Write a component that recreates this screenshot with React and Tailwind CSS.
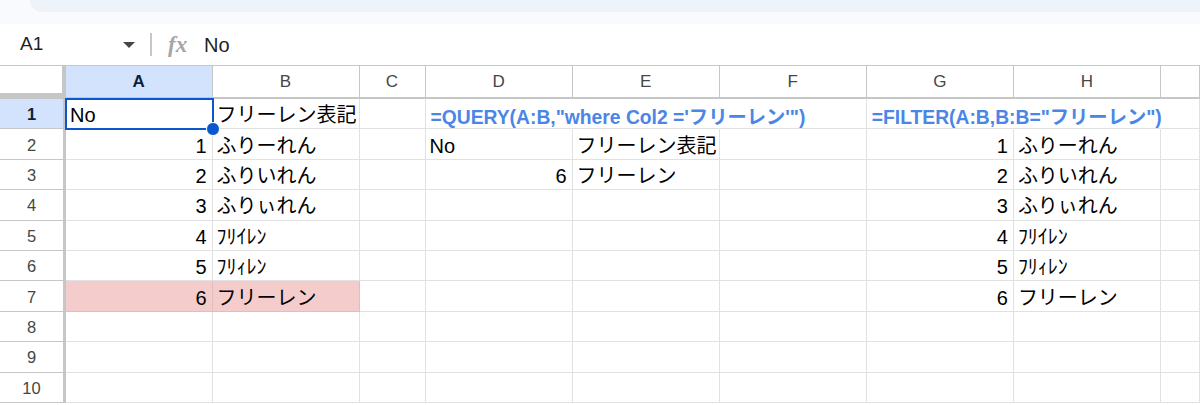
import React from 'react';

const FONT = "font-['Liberation_Sans','Noto_Sans_CJK_JP',sans-serif]";

const COLS = [
  { key: 'A', w: 'w-[146.5px]' },
  { key: 'B', w: 'w-[147px]' },
  { key: 'C', w: 'w-[66px]' },
  { key: 'D', w: 'w-[147.1px]' },
  { key: 'E', w: 'w-[147.1px]' },
  { key: 'F', w: 'w-[147.1px]' },
  { key: 'G', w: 'w-[147.1px]' },
  { key: 'H', w: 'w-[147.1px]' },
  { key: 'I', w: 'flex-1', hidden: true },
];

const SOURCE = ['ふりーれん', 'ふりいれん', 'ふりぃれん', 'ﾌﾘｲﾚﾝ', 'ﾌﾘｨﾚﾝ', 'フリーレン'];

// cell values per row, keyed by column; numbers are right aligned
function rowData(r) {
  const cells = {};
  if (r === 1) {
    cells.A = { v: 'No' };
    cells.B = { v: 'フリーレン表記' };
    cells.D = { v: `=QUERY(A:B,"where Col2 ='フリーレン'")`, formula: true };
    cells.G = { v: `=FILTER(A:B,B:B="フリーレン")`, formula: true };
  } else if (r <= 7) {
    const i = r - 1;
    cells.A = { v: String(i), num: true };
    cells.B = { v: SOURCE[i - 1] };
    cells.G = { v: String(i), num: true };
    cells.H = { v: SOURCE[i - 1] };
    if (r === 2) {
      cells.D = { v: 'No' };
      cells.E = { v: 'フリーレン表記' };
    }
    if (r === 3) {
      cells.D = { v: '6', num: true };
      cells.E = { v: 'フリーレン' };
    }
  }
  return cells;
}

// overflowing formula text hides the right gridline of the cells it runs over
const NO_RIGHT = { 1: ['D', 'E', 'G', 'H'] };

function Cell({ col, row, cell }) {
  const pink = row === 7 && (col.key === 'A' || col.key === 'B');
  const hideRight = (NO_RIGHT[row] || []).includes(col.key);
  return (
    <div
      className={[
        col.w,
        'relative h-full shrink-0 flex items-center pt-[3px] border-b',
        hideRight ? 'border-r border-r-transparent' : 'border-r',
        pink ? 'bg-[#f4cccc] border-[#e3bcbc]' : 'border-[#e1e1e1]',
        cell?.num ? 'justify-end pr-[5px]' : 'pl-[4px]',
      ].join(' ')}
    >
      {cell && (
        <span
          className={
            cell.formula
              ? 'absolute left-[5px] top-[5px] z-10 whitespace-nowrap font-bold text-[#4a86e8] text-[19.3px]'
              : 'whitespace-nowrap text-black text-[20px]'
          }
        >
          {cell.v}
        </span>
      )}
    </div>
  );
}

export default function App() {
  const rows = [1, 2, 3, 4, 5, 6, 7, 8, 9, 10];

  return (
    <div className={`w-[1200px] h-[405px] overflow-hidden bg-white ${FONT}`}>
      {/* toolbar edge */}
      <div className="h-[24px] bg-[#f8fafd]">
        <div className="ml-[30px] h-[12px] bg-[#eef2f9] rounded-bl-[12px]" />
      </div>

      {/* name box + formula bar */}
      <div className="h-[41px] flex items-center">
        <div className="w-[150px] flex items-center pl-[20px] pr-[14px]">
          <span className="text-[19px] text-[#1f1f1f]">A1</span>
          <svg className="ml-auto" width="14" height="8" viewBox="0 0 14 8">
            <path d="M1 1h12L7 7z" fill="#444746" />
          </svg>
        </div>
        <div className="w-[2px] h-[23px] bg-[#c7c7c7]" />
        <span className="ml-[16px] w-[28px] font-['Liberation_Serif',serif] italic font-bold text-[23px] text-[#a6a6a6] leading-none">
          fx
        </span>
        <span className="ml-[8px] text-[20px] text-[#1f1f1f]">No</span>
      </div>

      {/* column headers */}
      <div className="h-[34px] flex border-t border-b-2 border-[#c4c7c5]">
        <div className="w-[66px] shrink-0 h-full bg-white border-r-[4px] border-b-[4px] border-[#c4c7c5]" />
        {COLS.map((c) => (
          <div
            key={c.key}
            className={[
              c.w,
              'shrink-0 h-full flex items-center justify-center border-r border-[#c4c7c5] text-[17px]',
              c.key === 'A' ? 'bg-[#d3e3fd] font-bold text-[#0b1f3a]' : 'text-[#444746]',
            ].join(' ')}
          >
            {c.hidden ? '' : c.key}
          </div>
        ))}
      </div>

      {/* grid */}
      {rows.map((r) => {
        const data = rowData(r);
        return (
          <div key={r} className="h-[30.4px] flex relative">
            <div
              className={[
                'w-[66px] shrink-0 h-full flex items-center justify-center pt-[2px] border-r-[3px] border-b border-[#c4c7c5] text-[16.5px]',
                r === 1 ? 'bg-[#d3e3fd] font-bold text-[#0b1f3a]' : 'text-[#444746]',
              ].join(' ')}
            >
              {r}
            </div>
            {COLS.map((c) => (
              <Cell key={c.key} col={c} row={r} cell={data[c.key]} />
            ))}
            {r === 1 && (
              <div className="absolute left-[65px] top-[-1px] w-[148.5px] h-[32px] border-2 border-[#0b57d0] pointer-events-none z-20">
                <div className="absolute right-[-8px] bottom-[-8px] w-[14px] h-[14px] rounded-full bg-[#0b57d0] border border-white" />
              </div>
            )}
          </div>
        );
      })}
    </div>
  );
}
